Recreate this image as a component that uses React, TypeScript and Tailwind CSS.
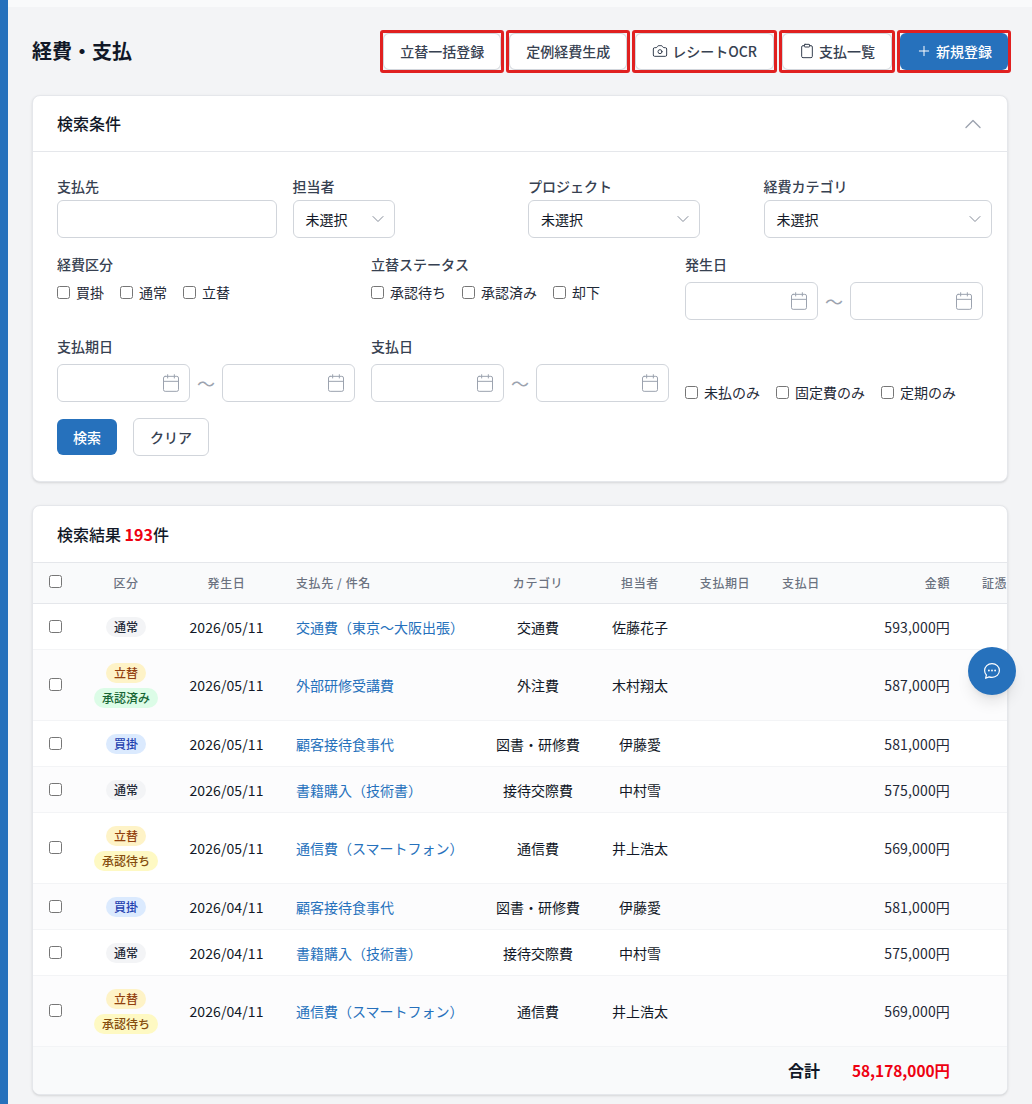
import { Calendar, Camera, ChevronDown, ChevronUp, Clipboard, Plus } from "lucide-react";

const font = { fontFamily: '"Noto Sans CJK JP", "Noto Sans", sans-serif' };

function Check({ label }: { label?: string }) {
  return (
    <label className="flex items-center gap-[6px] text-sm leading-[20px] text-[#1f2937]">
      <span className="block h-[13px] w-[13px] rounded-[2.5px] border border-[#767676] bg-white" />
      {label && <span>{label}</span>}
    </label>
  );
}

function Select({ w }: { w: string }) {
  return (
    <div className={`flex h-[38px] items-center justify-between rounded-md border border-[#d1d5db] bg-white pl-3 pr-[6px] text-sm text-[#111827] ${w}`}>
      <span>未選択</span>
      <ChevronDown className="h-5 w-5 text-[#858c99]" strokeWidth={1.2} />
    </div>
  );
}

function DateBox() {
  return (
    <div className="flex h-[38px] w-[133px] items-center justify-end rounded-md border border-[#d1d5db] bg-white pr-[8.500px]">
      <Calendar className="h-5 w-5 text-[#9ca3af]" strokeWidth={1.2} />
    </div>
  );
}

function DateRange() {
  return (
    <div className="flex items-center justify-between">
      <DateBox />
      <span className="text-lg leading-none text-[#9ca3af]">〜</span>
      <DateBox />
    </div>
  );
}

function Label({ mb, children }: { mb: string; children: string }) {
  return <div className={`text-sm font-medium leading-[21px] text-[#374151] ${mb}`}>{children}</div>;
}

function Pill({ c, children }: { c: string; children: string }) {
  return <span className={`inline-block rounded-full px-2 text-xs font-medium leading-[20px] ${c}`}>{children}</span>;
}

const tsu = "bg-[#f3f4f6] text-[#1f2937]";
const kai = "bg-[#dbeafe] text-[#1e40af]";
const tat = "bg-[#fef3c7] text-[#92400e]";
const ok = "bg-[#dcfce7] text-[#166534]";
const wait = "bg-[#fef9c3] text-[#854d0e]";

type Row = { k: "通常" | "買掛" | "立替"; s?: string; d: string; n: string; c: string; p: string; a: string };
const rows: Row[] = [
  { k: "通常", d: "2026/05/11", n: "交通費（東京〜大阪出張）", c: "交通費", p: "佐藤花子", a: "593,000円" },
  { k: "立替", s: "承認済み", d: "2026/05/11", n: "外部研修受講費", c: "外注費", p: "木村翔太", a: "587,000円" },
  { k: "買掛", d: "2026/05/11", n: "顧客接待食事代", c: "図書・研修費", p: "伊藤愛", a: "581,000円" },
  { k: "通常", d: "2026/05/11", n: "書籍購入（技術書）", c: "接待交際費", p: "中村雪", a: "575,000円" },
  { k: "立替", s: "承認待ち", d: "2026/05/11", n: "通信費（スマートフォン）", c: "通信費", p: "井上浩太", a: "569,000円" },
  { k: "買掛", d: "2026/04/11", n: "顧客接待食事代", c: "図書・研修費", p: "伊藤愛", a: "581,000円" },
  { k: "通常", d: "2026/04/11", n: "書籍購入（技術書）", c: "接待交際費", p: "中村雪", a: "575,000円" },
  { k: "立替", s: "承認待ち", d: "2026/04/11", n: "通信費（スマートフォン）", c: "通信費", p: "井上浩太", a: "569,000円" },
];

const btn = "flex items-center justify-center gap-1 rounded-md text-sm font-medium";

function Marked({ blue, children }: { blue?: boolean; children: React.ReactNode }) {
  return (
    <div className="rounded-[3px] border-[3px] border-[#e02020]">
      <div className={`${btn} h-[37px] px-4 pb-[2px] ${blue ? "bg-[#2671bc] text-white" : "border border-[#d1d5db] bg-white text-[#374151]"}`}>{children}</div>
    </div>
  );
}

export default function App() {
  return (
    <div style={font} className="relative h-[1104px] w-[1032px] overflow-hidden border-l-[8px] border-[#2671bc] bg-[#f3f4f6]">
      <div className="h-[7px] bg-[#f9fafb]" />
      <div className="px-6 pt-[23px]">
        <div className="mr-[-3px] flex h-[43px] items-center justify-between">
          <h1 className="pb-[2px] text-xl font-bold text-[#111827]">経費・支払</h1>
          <div className="flex gap-[2px]">
            <Marked>立替一括登録</Marked>
            <Marked>定例経費生成</Marked>
            <Marked><Camera className="h-4 w-4" strokeWidth={1.5} />レシートOCR</Marked>
            <Marked><Clipboard className="h-4 w-4" strokeWidth={1.5} />支払一覧</Marked>
            <Marked blue><Plus className="h-4 w-4" strokeWidth={1.5} />新規登録</Marked>
          </div>
        </div>

        <section className="mt-[22px] h-[387px] rounded-lg border border-[#e5e7eb] bg-white shadow-sm">
          <div className="flex h-[56px] items-center justify-between border-b border-[#e5e7eb] pl-6 pr-[20px]">
            <h2 className="pb-[2px] text-base font-medium text-[#111827]">検索条件</h2>
            <ChevronUp className="h-7 w-7 text-[#9ca3af]" strokeWidth={1.2} />
          </div>
          <div className="px-6 pt-6">
            <div className="grid grid-cols-4 gap-4">
              <div>
                <Label mb="mb-[3px]">支払先</Label>
                <div className="h-[38px] rounded-md border border-[#d1d5db] bg-white" />
              </div>
              <div>
                <Label mb="mb-[3px]">担当者</Label>
                <Select w="w-[102px]" />
              </div>
              <div>
                <Label mb="mb-[3px]">プロジェクト</Label>
                <Select w="w-[172px]" />
              </div>
              <div>
                <Label mb="mb-[3px]">経費カテゴリ</Label>
                <Select w="w-[228px]" />
              </div>
            </div>

            <div className="mt-4 grid grid-cols-3 gap-4">
              <div>
                <Label mb="mb-[7px]">経費区分</Label>
                <div className="flex gap-4"><Check label="買掛" /><Check label="通常" /><Check label="立替" /></div>
              </div>
              <div>
                <Label mb="mb-[7px]">立替ステータス</Label>
                <div className="flex gap-4"><Check label="承認待ち" /><Check label="承認済み" /><Check label="却下" /></div>
              </div>
              <div>
                <Label mb="mb-[7px]">発生日</Label>
                <DateRange />
              </div>
              <div>
                <Label mb="mb-[7px]">支払期日</Label>
                <DateRange />
              </div>
              <div>
                <Label mb="mb-[7px]">支払日</Label>
                <DateRange />
              </div>
              <div className="flex items-end gap-4">
                <Check label="未払のみ" /><Check label="固定費のみ" /><Check label="定期のみ" />
              </div>
            </div>

            <div className="mt-4 flex items-center gap-4">
              <div className={`${btn} h-9 w-[60px] bg-[#2671bc] text-white`}>検索</div>
              <div className={`${btn} h-[38px] w-[76px] border border-[#d1d5db] bg-white text-[#374151]`}>クリア</div>
            </div>
          </div>
        </section>

        <section className="mt-[23px] h-[590px] overflow-hidden rounded-lg border border-[#e5e7eb] bg-white shadow-sm">
          <div className="flex h-[56px] items-center pl-6 text-base font-medium text-[#111827]">
            検索結果&nbsp;<span className="font-bold text-[#ee0011]">193</span>件
          </div>
          <table className="w-[1007px] table-fixed border-collapse text-sm">
            <colgroup>
              <col className="w-[46px]" />
              <col className="w-[94px]" />
              <col className="w-[107px]" />
              <col className="w-[198px]" />
              <col className="w-[120px]" />
              <col className="w-[84px]" />
              <col className="w-[86px]" />
              <col className="w-[66px]" />
              <col className="w-[132px]" />
              <col className="w-[74px]" />
            </colgroup>
            <thead>
              <tr className="h-[41px] border-y border-[#e5e7eb] bg-[#f9fafb] text-xs tracking-[0.05em] text-[#6b7280]">
                <th className="pb-[3px] pl-4 text-left font-medium"><Check /></th>
                <th className="font-medium">区分</th>
                <th className="font-medium">発生日</th>
                <th className="pl-4 text-left font-medium">支払先 / 件名</th>
                <th className="font-medium">カテゴリ</th>
                <th className="font-medium">担当者</th>
                <th className="font-medium">支払期日</th>
                <th className="font-medium">支払日</th>
                <th className="pr-4 text-right font-medium">金額</th>
                <th className="pl-4 text-left font-medium">証憑</th>
              </tr>
            </thead>
            <tbody>
              {rows.map((r, i) => (
                <tr key={i} className={`border-b border-[#f3f4f6] text-[#111827] ${i % 2 === 1 ? "bg-[#fcfcfd]" : "bg-white"} ${r.s ? "h-[71px]" : "h-[46px]"}`}>
                  <td className={`pl-4 ${r.s ? "pb-[2px]" : ""}`}><Check /></td>
                  <td className="text-center">
                    <div className="flex flex-col items-center gap-[5px]">
                      <Pill c={r.k === "通常" ? tsu : r.k === "買掛" ? kai : tat}>{r.k}</Pill>
                      {r.s && <Pill c={r.s === "承認済み" ? ok : wait}>{r.s}</Pill>}
                    </div>
                  </td>
                  <td className="text-center tracking-[0.1px]">{r.d}</td>
                  <td className="pl-4 text-[#2671bc]">{r.n}</td>
                  <td className="text-center">{r.c}</td>
                  <td className="text-center">{r.p}</td>
                  <td />
                  <td />
                  <td className="pr-4 text-right tracking-[0.15px] text-[#1f2937]">{r.a}</td>
                  <td />
                </tr>
              ))}
              <tr className="h-[48px] bg-[#f9fafb] font-bold">
                <td colSpan={7} />
                <td className="whitespace-nowrap pb-[2px] pr-[14px] text-right text-base text-[#111827]">合計</td>
                <td className="pb-[2px] pr-4 text-right text-[15.400px] text-[#ee0011]">58,178,000円</td>
                <td />
              </tr>
            </tbody>
          </table>
        </section>
      </div>

      <div className="absolute left-[960px] top-[647px] flex h-12 w-12 items-center justify-center rounded-full bg-[#2671bc] shadow-lg">
        <svg viewBox="0 0 18 18" className="h-[18px] w-[18px]" fill="none" stroke="white" strokeWidth="1.2" strokeLinejoin="round">
          <path d="M9 1.6c4.2 0 7.4 3 7.4 6.9s-3.2 6.9-7.4 6.9c-1 0-2-.2-2.9-.5L2.6 16.3l.8-3.3C2.2 11.800 1.600 10.200 1.600 8.500 1.600 4.600 4.800 1.600 9 1.600Z" />
          <circle cx="5.900" cy="8.500" r=".9" fill="white" stroke="none" />
          <circle cx="9" cy="8.500" r=".9" fill="white" stroke="none" />
          <circle cx="12.100" cy="8.500" r=".9" fill="white" stroke="none" />
        </svg>
      </div>
    </div>
  );
}
